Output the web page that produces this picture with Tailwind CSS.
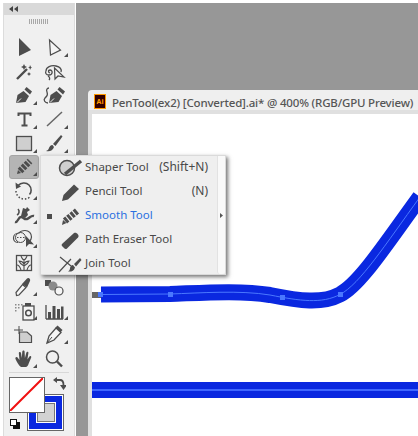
<!DOCTYPE html>
<html lang="en">
<head>
  <title>Smooth Tool</title>
  <meta charset="UTF-8">
  <meta name="viewport" content="width=device-width, initial-scale=1.0">
  <script src="https://cdn.jsdelivr.net/npm/@tailwindcss/browser@4"></script>
</head>
<body class="w-[418px] h-[436px] overflow-hidden bg-white font-['Noto_Sans','Open_Sans',sans-serif]">
  <div class="relative flex w-[418px] h-[436px] pt-[3px]">

    <!-- tools panel -->
    <aside class="w-[72px] ml-[3px] mr-[1px] shrink-0 bg-[#f0f0f0] border-x border-[#dcdcdc] flex flex-col">
      <div class="h-[12px] bg-[#d9d9d9] flex items-center pl-[5px] shrink-0">
        <svg width="9" height="6" viewBox="0 0 9 6" fill="#444"><path d="M4 0v6L0 3zM9 0v6L5 3z"/></svg>
      </div>
      <div class="h-[21px] flex justify-center pt-[4px] shrink-0">
        <div class="w-[20px] h-[5px] bg-[repeating-linear-gradient(90deg,#a8a8a8_0,#a8a8a8_1px,transparent_1px,transparent_2px)]"></div>
      </div>
      <div class="grid grid-cols-[30px_30px] gap-x-[1px] auto-rows-[23.9px] pl-[5px]">
        <!-- row 1 -->
        <svg viewBox="0 0 30 24" class="w-[30px] h-[24px]"><path d="M10 2l12 12-12 6z" fill="#4d4d4d"/></svg>
        <svg viewBox="0 0 30 24" class="w-[30px] h-[24px]"><path d="M9.500 4l11 10-10 5z" fill="#f5f5f5" stroke="#4d4d4d" stroke-width="1.200"/><path d="M28 17v4h-4z" fill="#4d4d4d"/></svg>
        <!-- row 2 -->
        <svg viewBox="0 0 30 24" class="w-[30px] h-[24px]"><path d="M8 19L18 9" stroke="#4d4d4d" stroke-width="2.400" fill="none"/><path d="M15 4l1 2 2 1-2 1-1 2-1-2-2-1 2-1zM21 5l1 2 1 .5-1 .5-1 2-.5-2-1.500-.5 1.500-.5zM20 12l.7 1.300 1.300.7-1.300.7-.7 1.300-.7-1.300-1.300-.7 1.300-.7z" fill="#4d4d4d"/></svg>
        <svg viewBox="0 0 30 24" class="w-[30px] h-[24px]"><path d="M6 11c0-4 5-6 10-5 4 1 6 3 5 6M6 11c-1 2 0 4 3 4 4 0 4-5 1-5-2 0-2 2 0 3M8 16c2 1 2 3 1 4" fill="none" stroke="#4d4d4d" stroke-width="1.300"/><path d="M14.500 8l.5 11 3-3 6 1z" fill="#f5f5f5" stroke="#4d4d4d" stroke-width="1.200"/></svg>
        <!-- row 3 -->
        <svg viewBox="0 0 30 24" class="w-[30px] h-[24px]"><path d="M7 19l1.500-8 6-4 5.500 5-3.500 6z" fill="#4d4d4d"/><path d="M15.500 5.500l2-2.500 5.500 4.500-2 3z" fill="#4d4d4d"/><path d="M8 18.500l4-4" stroke="#f0f0f0" stroke-width="1"/><path d="M28 17v4h-4z" fill="#4d4d4d"/></svg>
        <svg viewBox="0 0 30 24" class="w-[30px] h-[24px]"><path d="M9 19l1.500-8 6-4 5.500 5-3.500 6z" fill="#4d4d4d"/><path d="M17.500 5.500l2-2.500 5.500 4.500-2 3z" fill="#4d4d4d"/><path d="M10 18.500l4-4" stroke="#f0f0f0" stroke-width="1"/><path d="M9 4C7 4 6 6 7 8c1 3 0 4-2 6-2 2 0 5 3 5" fill="none" stroke="#4d4d4d" stroke-width="1.300"/></svg>
        <!-- row 4 -->
        <svg viewBox="0 0 30 24" class="w-[30px] h-[24px]"><path d="M9.500 8V5.500h12V8M15.500 5.500v12M12.500 17.500h6" fill="none" stroke="#4d4d4d" stroke-width="2"/><path d="M28 17v4h-4z" fill="#4d4d4d"/></svg>
        <svg viewBox="0 0 30 24" class="w-[30px] h-[24px]"><path d="M7 18L22 4" stroke="#666" stroke-width="1.500" fill="none"/><path d="M28 17v4h-4z" fill="#4d4d4d"/></svg>
        <!-- row 5 -->
        <svg viewBox="0 0 30 24" class="w-[30px] h-[24px]"><rect x="7.500" y="4.500" width="15" height="14" fill="#cfcfcf" stroke="#4d4d4d" stroke-width="1.300"/><path d="M28 17v4h-4z" fill="#4d4d4d"/></svg>
        <svg viewBox="0 0 30 24" class="w-[30px] h-[24px]"><path d="M13 12L21 3l1.500 1.500L15.500 14z" fill="#4d4d4d"/><path d="M12.500 13c-2 0-3 1.500-3.500 3-.4 1.500-1.500 2.500-3 3 3.500 1 7-.5 8-4z" fill="#4d4d4d"/><path d="M28 17v4h-4z" fill="#4d4d4d"/></svg>
        <!-- row 6 -->
        <div class="relative w-[30px] h-[24px]">
          <div class="absolute inset-0 bg-[#b5b5b5] border border-[#a5a5a5] rounded-[3px]"></div>
          <svg viewBox="0 0 30 24" class="absolute inset-0 w-[30px] h-[24px]"><path d="M11 16L21 6" stroke="#4d4d4d" stroke-width="6.500" stroke-dasharray="3 1.200"/><path d="M8 19l1-4 3 3z" fill="#4d4d4d"/><path d="M28 17v4h-4z" fill="#4d4d4d"/></svg>
        </div>
        <div></div>
        <!-- row 7 -->
        <svg viewBox="0 0 30 24" class="w-[30px] h-[24px]"><path d="M9 6.500C12 3.500 17 3 20 6c3 3 2.500 7.500.5 9.500" fill="none" stroke="#4d4d4d" stroke-width="1.600"/><path d="M6.500 3.500l.5 6.500 5-2.500z" fill="#4d4d4d"/><path d="M7 12c0 4 3.500 8 8 8s6-2 6-3" fill="none" stroke="#4d4d4d" stroke-width="1.500" stroke-dasharray="1.500 1.800"/><path d="M28 17v4h-4z" fill="#4d4d4d"/></svg>
        <div></div>
        <!-- row 8 -->
        <svg viewBox="0 0 30 24" class="w-[30px] h-[24px]"><path d="M6 19c3 1 3-5 6-5s3 3 6 2 4-4 7-3" fill="none" stroke="#4d4d4d" stroke-width="2.400"/><path d="M8 12c2-1 3-4 1-6" fill="none" stroke="#4d4d4d" stroke-width="1.600"/><path d="M12 13l2-8 3 1 1-2 3 3-3 2 1 3-3 3z" fill="#4d4d4d"/><path d="M28 17v4h-4z" fill="#4d4d4d"/></svg>
        <div></div>
        <!-- row 9 -->
        <svg viewBox="0 0 30 24" class="w-[30px] h-[24px]"><path d="M9 15.500c-3.500 0-4.500-2.500-4.500-4.500C4.500 8 7 6 10 6c1.500-2 3.500-2.500 6-2.500 4 0 6.500 3 6.500 6.500 0 2-1 3.500-2.500 5" fill="none" stroke="#4d4d4d" stroke-width="1.200"/><circle cx="11.500" cy="10.500" r="5" fill="none" stroke="#4d4d4d"/><path d="M8 10.500h9" stroke="#4d4d4d" stroke-dasharray="1.500 1.500"/><path d="M17 9v11l3-3 5 .5z" fill="#4d4d4d"/><path d="M28 17v4h-4z" fill="#4d4d4d"/></svg>
        <div></div>
        <!-- row 10 -->
        <svg viewBox="0 0 30 24" class="w-[30px] h-[24px]"><rect x="7.500" y="4.500" width="15" height="15" fill="none" stroke="#4d4d4d" stroke-width="1.300"/><path d="M15 19V9M15 15c-2-1-4-2-5-5 3 0 4 1 5 3M15 15c2-1 4-2 5-5-3 0-4 1-5 3M15 9c-2-1-2-2-3-4M15 9c2-1 2-2 3-4M8 14c2 0 3 2 4 5M22 14c-2 0-3 2-4 5" fill="none" stroke="#4d4d4d" stroke-width="1.100"/></svg>
        <div></div>
        <!-- row 11 -->
        <svg viewBox="0 0 30 24" class="w-[30px] h-[24px]"><path d="M7.500 20.500l-.5-3 6.500-8 3.500 3-7 7.500z" fill="#f5f5f5" stroke="#4d4d4d" stroke-width="1.200"/><path d="M13 9l5-5.500c1.500-1.500 4 .5 3 2.500l-3 6.500z" fill="#4d4d4d"/><path d="M28 17v4h-4z" fill="#4d4d4d"/></svg>
        <svg viewBox="0 0 30 24" class="w-[30px] h-[24px]"><rect x="5" y="5" width="6" height="6" fill="#4d4d4d"/><circle cx="13" cy="11" r="4.500" fill="#8a8a8a"/><circle cx="19" cy="16" r="4" fill="#f5f5f5" stroke="#4d4d4d" stroke-width="1.200"/></svg>
        <!-- row 12 -->
        <svg viewBox="0 0 30 24" class="w-[30px] h-[24px]"><rect x="14" y="7" width="11" height="14" fill="#f5f5f5" stroke="#4d4d4d" stroke-width="1.300"/><rect x="16" y="4" width="6" height="3" fill="#4d4d4d"/><circle cx="19.500" cy="14" r="2.800" fill="none" stroke="#4d4d4d" stroke-width="1.500"/><path d="M6 5h1.500v1.500H6zM9 5h1.500v1.500H9zM12 5h1.500v1.500H12zM6 8h1.500v1.500H6zM9 8h1.500v1.500H9zM6 11h1.500v1.500H6z" fill="#8a8a8a"/><path d="M28 17v4h-4z" fill="#4d4d4d"/></svg>
        <svg viewBox="0 0 30 24" class="w-[30px] h-[24px]"><path d="M6 20V6M6 20h17" stroke="#4d4d4d" stroke-width="1.300" fill="none"/><path d="M8 13h3v7H8zM12.500 7H15.500v13H12.500zM17 10h3V20h-3zM21 7.500H23.500V20H21z" fill="#4d4d4d"/><path d="M28 17v4h-4z" fill="#4d4d4d"/></svg>
        <!-- row 13 -->
        <svg viewBox="0 0 30 24" class="w-[30px] h-[24px]"><path d="M10.500 9H18l4.500 4v6.500h-12z" fill="#cfcfcf" stroke="#4d4d4d" stroke-width="1.200"/><path d="M5 7h9M10 3v8" stroke="#4d4d4d" fill="none"/></svg>
        <svg viewBox="0 0 30 24" class="w-[30px] h-[24px]"><path d="M7 20l2-7 7-8 5 4.500-7 7.500z" fill="#f5f5f5" stroke="#4d4d4d" stroke-width="1.300"/><path d="M15.500 4.500l2-2 5 4.500-2 2.500z" fill="#4d4d4d"/><path d="M7 20l5-6" stroke="#4d4d4d"/><path d="M28 17v4h-4z" fill="#4d4d4d"/></svg>
        <!-- row 14 -->
        <svg viewBox="0 0 30 24" class="w-[30px] h-[24px]"><path d="M12 20c-2-1-4-5-5.500-8-.6-1.500 1-2.500 2-1.500l2 2.500-.7-7c0-1.500 2-1.500 2.200 0l.8 5 .5-6.500c.2-1.500 2.200-1.500 2.300 0l.3 6.500 1.500-5.500c.5-1.400 2.200-1 2 .5l-1 6.500 2-3c.8-1.200 2.300-.3 1.800 1l-2.500 6c-.7 2-1.500 3.500-3 3.500z" fill="#4d4d4d"/><path d="M28 17v4h-4z" fill="#4d4d4d"/></svg>
        <svg viewBox="0 0 30 24" class="w-[30px] h-[24px]"><circle cx="12.500" cy="10" r="6" fill="none" stroke="#4d4d4d" stroke-width="1.500"/><path d="M17 14.500l5 5" stroke="#4d4d4d" stroke-width="2.400"/></svg>
      </div>
      <div class="h-px bg-[#d8d8d8] mx-[5px] mt-[2px] shrink-0"></div>
      <!-- fill and stroke -->
      <div class="relative h-[58px] shrink-0">
        <div class="absolute left-[5px] top-[4px] w-[36px] h-[36px] z-10 bg-white border-[1.5px] border-[#666] overflow-hidden">
          <svg viewBox="0 0 33 33" class="w-[33px] h-[33px]"><path d="M0 33L33 0" stroke="#f01010" stroke-width="2"/></svg>
        </div>
        <div class="absolute left-[23px] top-[21px] w-[37px] h-[37px] bg-white border border-[#666] p-px">
          <div class="w-full h-full bg-[#0a28e0] flex items-center justify-center">
            <div class="w-[18px] h-[19px] bg-[#d2d2d2] border border-[#777] outline outline-white"></div>
          </div>
        </div>
        <svg viewBox="0 0 13 13" class="absolute left-[49px] top-[4px] w-[13px] h-[13px]"><path d="M2 3h5c2.500 0 3.500 2 3.500 5" fill="none" stroke="#4d4d4d" stroke-width="1.800"/><path d="M4 0v6L0 3zM7 8h7l-3.500 5z" fill="#4d4d4d"/></svg>
        <svg viewBox="0 0 10 10" class="absolute left-[6px] top-[46px] w-[10px] h-[10px]"><rect x="3" y="3" width="7" height="7" fill="#111"/><rect x=".5" y=".5" width="6" height="6" fill="#fff" stroke="#111"/></svg>
      </div>
    </aside>

    <!-- pasteboard -->
    <main class="flex-1 min-w-0 bg-[#979797] pl-[12px] pt-[87px] overflow-hidden">
      <div class="h-[24px] bg-[#efefef] rounded-tl-[4px] border-b border-[#c8c8c8] flex items-center pl-[6px] gap-[6px] whitespace-nowrap">
        <div class="w-[12px] h-[15px] shrink-0 bg-[#330000] border border-[#ff9a00] flex items-center justify-center text-[7px] font-bold leading-none text-[#ff9a00]">Ai</div>
        <span class="pt-[2px] text-[11.5px] leading-none tracking-[-0.17px] font-medium text-[#555]">PenTool(ex2) [Converted].ai* @ 400% (RGB/GPU Preview)</span>
      </div>
      <div class="relative h-[322px] ml-[4px] bg-white outline-[4px] outline-[#e0e0e0]">
        <!-- artwork -->
        <svg viewBox="92 114 326 322" class="absolute inset-0 w-[326px] h-[322px]">
          <rect x="92" y="292" width="9" height="6" fill="#666"/>
          <path d="M101 294.500L170 294C200 293 240 290 270 295C300 301 322 304 340 294.500C360 284 385 245 420 197" fill="none" stroke="#0a28e0" stroke-width="16"/>
          <path d="M101 294.500L170 294C200 293 240 290 270 295C300 301 322 304 340 294.500C360 284 385 245 420 197" fill="none" stroke="#4a78ff" stroke-width="1"/>
          <rect x="92" y="382" width="326" height="16" fill="#0a28e0"/>
          <rect x="92" y="389" width="326" height="2" fill="#3f66ff"/>
          <path d="M98 292h5v5h-5zM168 292h5v5h-5zM280 295h5v5h-5zM338 292h5v5h-5z" fill="#4a78ff"/>
        </svg>
      </div>
    </main>

    <!-- flyout menu -->
    <div class="absolute left-[40px] top-[155px] w-[186px] h-[120px] bg-[#efefef] border border-[#dadada] shadow-[2px_2px_4px_rgba(0,0,0,0.55)] flex">
      <div class="flex-1 text-[11.5px] text-[#484848]">
        <div class="h-[24px] flex items-center pl-[15px]">
          <svg viewBox="0 0 28 20" class="w-[28px] h-[20px] mr-[1px]"><circle cx="11" cy="10" r="7.500" fill="#cfcfcf" stroke="#4d4d4d" stroke-width="1.500"/><path d="M9 16L25 3" stroke="#4d4d4d" stroke-width="3.500"/></svg>
          <span class="pb-[2px]">Shaper Tool</span><span class="ml-auto pr-[9px] pb-[2px] text-[12px]">(Shift+N)</span>
        </div>
        <div class="h-[24px] flex items-center pl-[15px]">
          <svg viewBox="0 0 28 20" class="w-[28px] h-[20px] mr-[1px]"><path d="M6 19l1.500-6L18 2.500 23 7 12 17.500z" fill="#4d4d4d"/></svg>
          <span class="pb-[2px]">Pencil Tool</span><span class="ml-auto pr-[9px] pb-[2px] text-[12px]">(N)</span>
        </div>
        <div class="h-[24px] flex items-center">
          <div class="w-[5px] h-[5px] ml-[6px] mr-[4px] bg-[#4d4d4d]"></div>
          <svg viewBox="0 0 28 20" class="w-[28px] h-[20px] mr-[1px]"><path d="M9 15L21 5" stroke="#4d4d4d" stroke-width="6.500" stroke-dasharray="3 1.200"/><path d="M6 19l1-5 3.500 3z" fill="#4d4d4d"/></svg>
          <span class="pb-[2px] text-[#2a6fe0]">Smooth Tool</span>
        </div>
        <div class="h-[24px] flex items-center pl-[15px]">
          <svg viewBox="0 0 28 20" class="w-[28px] h-[20px] mr-[1px]"><path d="M6 14L18 3c2-1.500 6 2 4 4.500L11 18.500c-1 .8-2 .5-2.500 0L6 16c-.5-.6-.5-1.500 0-2z" fill="#4d4d4d"/></svg>
          <span class="pb-[2px]">Path Eraser Tool</span>
        </div>
        <div class="h-[24px] flex items-center pl-[15px]">
          <svg viewBox="0 0 28 20" class="w-[28px] h-[20px] mr-[1px]"><path d="M4 3l11 9M3 18L15 5" fill="none" stroke="#4d4d4d" stroke-width="1.200"/><path d="M18 10l6-6 1.500 2-5.500 6.500zM17 11c-2 0-3 2-3 3.500-.2 1.500-1 2.500-2 3 3 .5 6-.5 7-4z" fill="#4d4d4d"/></svg>
          <span class="pb-[2px]">Join Tool</span>
        </div>
      </div>
      <div class="w-[8px] bg-[#f9f9f9] border-l border-[#e2e2e2] rounded-b-[3px] flex items-center justify-center">
        <svg viewBox="0 0 3 5" class="w-[3px] h-[5px]"><path d="M0 0l3 2.500L0 5z" fill="#555"/></svg>
      </div>
    </div>
  </div>
</body>
</html>
